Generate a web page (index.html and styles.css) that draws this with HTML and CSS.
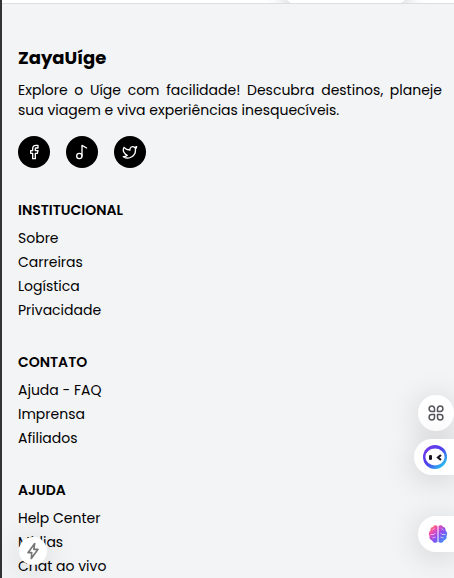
FILE: index.html
```html
<!DOCTYPE html>
<html lang="pt">
<head>
<meta charset="utf-8">
<meta name="viewport" content="width=device-width, initial-scale=1">
<title>ZayaUíge</title>
<link rel="stylesheet" href="styles.css">
</head>
<body>
<main class="strip"><div class="card-edge"></div></main>
<footer class="footer">
  <section class="brand">
    <h2 class="brand-name">ZayaUíge</h2>
    <p class="brand-text">Explore o Uíge com facilidade! Descubra destinos, planeje sua viagem e viva experiências inesquecíveis.</p>
    <div class="social">
      <a class="social-link" href="#" aria-label="Facebook"><svg viewBox="0 0 24 24"><path d="M18 2h-3a5 5 0 0 0-5 5v3H7v4h3v8h4v-8h3l1-4h-4V7a1 1 0 0 1 1-1h3z"/></svg></a>
      <a class="social-link" href="#" aria-label="Música"><svg viewBox="0 0 24 24"><circle cx="8" cy="18" r="4"/><path d="M12 18V2l7 4"/></svg></a>
      <a class="social-link" href="#" aria-label="Twitter"><svg viewBox="0 0 24 24"><path d="M22 4s-.7 2.100-2 3.400c1.600 10-9.400 17.300-18 11.600 2.200.1 4.400-.6 6-2C3 15.500.5 9.600 3 5c2.200 2.600 5.600 4.100 9 4-.9-4.200 4-6.600 7-3.800 1.100 0 3-1.200 3-1.200z"/></svg></a>
    </div>
  </section>
  <nav class="group" aria-labelledby="inst">
    <h3 class="group-title" id="inst">INSTITUCIONAL</h3>
    <ul class="links">
      <li><a href="#">Sobre</a></li>
      <li><a href="#">Carreiras</a></li>
      <li><a href="#">Logística</a></li>
      <li><a href="#">Privacidade</a></li>
    </ul>
  </nav>
  <nav class="group" aria-labelledby="cont">
    <h3 class="group-title" id="cont">CONTATO</h3>
    <ul class="links">
      <li><a href="#">Ajuda - FAQ</a></li>
      <li><a href="#">Imprensa</a></li>
      <li><a href="#">Afiliados</a></li>
    </ul>
  </nav>
  <nav class="group" aria-labelledby="ajuda">
    <h3 class="group-title" id="ajuda">AJUDA</h3>
    <ul class="links">
      <li><a href="#">Help Center</a></li>
      <li><a href="#">Mídias</a></li>
      <li><a href="#">Chat ao vivo</a></li>
    </ul>
  </nav>
</footer>

<button class="float quick" type="button" aria-label="Ações rápidas"><svg viewBox="0 0 24 24"><path d="M14 3 6 14h4.500L10 21l8-11h-5z"/></svg></button>
<button class="float apps" type="button" aria-label="Aplicações"><svg viewBox="0 0 16 16"><path d="M6.500 6.500H3.800A2.700 2.700 0 1 1 6.500 3.800zM9.500 6.500h2.700A2.700 2.700 0 1 0 9.500 3.800zM6.500 9.500H3.800a2.700 2.700 0 1 0 2.700 2.700zM9.500 9.500h2.700a2.700 2.700 0 1 1-2.700 2.700z"/></svg></button>
<button class="float tab bot" type="button" aria-label="Assistente"><svg viewBox="0 0 24 24">
  <defs><linearGradient id="ring" x1="0" y1="0" x2="1" y2="1"><stop offset="0" stop-color="#8035e8"/><stop offset=".5" stop-color="#4a43ee"/><stop offset=".85" stop-color="#28bdf0"/><stop offset="1" stop-color="#3979f0"/></linearGradient></defs>
  <circle cx="12" cy="12" r="12" fill="url(#ring)"/>
  <ellipse cx="12" cy="12" rx="9.600" ry="8.400" fill="#fff"/>
  <rect x="6" y="10" width="3" height="5" rx="1.200" fill="#151520"/>
  <path d="M18 10l-3 2.500 3 2.500" fill="none" stroke="#151520" stroke-width="2.200"/></svg></button>
<button class="float tab brain" type="button" aria-label="Inteligência"><svg viewBox="0 0 20 20">
  <defs><linearGradient id="lobe" x1="0" y1="0" x2="1" y2="1"><stop offset="0" stop-color="#ff9a35"/><stop offset=".28" stop-color="#f04bb0"/><stop offset=".55" stop-color="#8c4df0"/><stop offset="1" stop-color="#25a5fa"/></linearGradient></defs>
  <path fill="url(#lobe)" d="M9.500 2C8 .5 5.500 1 5 3 3 3 2 5 2.500 6.500.5 8 .5 10.500 1.500 12c-.5 2 .5 4 2.500 4.300C5 19 8 19.500 9.500 18zM10.500 2c1.500-1.500 4-1 4.500 1 2 0 3 2 2.500 3.500 2 1.500 2 4 1 5.500.5 2-.5 4-2.500 4.300-1 2.700-4 3.200-5.500 1.700z"/>
  <path fill="none" stroke="#fff" stroke-opacity=".6" d="M4.500 6 6.500 4.500M2.500 10.500H6l1.500-1.500M4.500 14l3-1M15.500 6 13.500 4.500M17.500 10.500H14l-1.500-1.500M15.500 14l-3-1"/></svg></button>
</body>
</html>
```
FILE: styles.css
```css
* {
  box-sizing: border-box;
}

body {
  margin: 0;
  height: 100vh;
  overflow: hidden;
  border-left: 2px solid #333336;
  background: #f3f4f6;
  color: #000;
  font-family: Poppins, Inter, "Liberation Sans", sans-serif;
  font-size: 14px;
  line-height: 20px;
}

h2, h3, p, ul {
  margin: 0;
  padding: 0;
}

a {
  color: inherit;
  text-decoration: none;
}

.strip {
  display: flex;
  align-items: flex-end;
  justify-content: flex-end;
  height: 3px;
  padding-right: 46px;
  overflow: hidden;
  background: #fff;
}

.card-edge {
  flex: none;
  width: 28%;
  min-width: 124px;
  height: 24px;
  margin-bottom: -1px;
  border-radius: 0 0 12px 12px;
  background: #fff;
  box-shadow: 0 0 20px rgba(0, 0, 0, 0.28);
}

.footer {
  display: flex;
  flex-direction: column;
  gap: 32px;
  padding: 40px 12px 32px 16px;
  border-top: 1px solid #dddee1;
  background: #f3f4f6;
}

.brand-name {
  margin-bottom: 8px;
  font-size: 18px;
  line-height: 28px;
  font-weight: 700;
}

.brand-text {
  text-align: justify;
}

.social {
  display: flex;
  gap: 16px;
  margin-top: 16px;
}

.social-link {
  display: grid;
  place-items: center;
  width: 32px;
  height: 32px;
  border-radius: 50%;
  background: #000;
}

.social-link svg {
  width: 16px;
  height: 16px;
  fill: none;
  stroke: #fff;
  stroke-width: 2;
  stroke-linecap: round;
  stroke-linejoin: round;
}

.group-title {
  margin-bottom: 8px;
  font-size: 14px;
  line-height: 20px;
  font-weight: 600;
}

.links {
  display: flex;
  flex-direction: column;
  gap: 4px;
  list-style: none;
}

.float {
  position: fixed;
  display: flex;
  align-items: center;
  justify-content: center;
  padding: 0;
  border: 0;
  background: #fff;
  box-shadow: 0 4px 32px rgba(0, 0, 0, 0.16);
}

.quick {
  left: 19px;
  bottom: 13px;
  width: 28px;
  height: 28px;
  border-radius: 50%;
}

.quick svg {
  width: 20px;
  height: 20px;
  fill: none;
  stroke: #777;
  stroke-width: 2;
  stroke-linejoin: round;
}

.apps {
  right: 0;
  top: 395px;
  width: 36px;
  height: 36px;
  border-radius: 50%;
}

.apps svg {
  width: 16px;
  height: 16px;
  fill: none;
  stroke: #55555c;
  stroke-width: 1.5;
  stroke-linejoin: round;
}

.tab {
  right: 0;
  height: 36px;
  justify-content: flex-start;
  border-radius: 18px 0 0 18px;
}

.bot {
  top: 439px;
  width: 40px;
  padding-left: 9px;
}

.bot svg {
  width: 24px;
  height: 24px;
}

.brain {
  top: 516px;
  width: 36px;
  padding-left: 10px;
}

.brain svg {
  width: 20px;
  height: 20px;
}
```
